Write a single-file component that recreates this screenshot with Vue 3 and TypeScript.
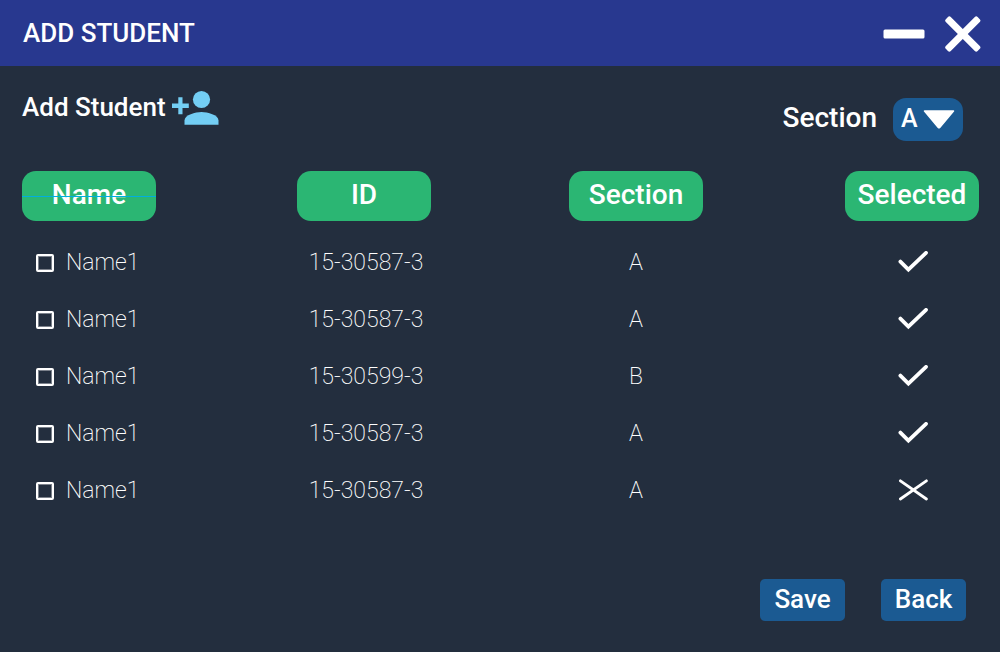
<script setup lang="ts">
import { ref } from 'vue'

interface Student {
  name: string
  id: string
  section: string
  selected: boolean
  checked: boolean
}

const columns: string[] = ['Name', 'ID', 'Section', 'Selected']
const section = ref<string>('A')
const students = ref<Student[]>([
  { name: 'Name1', id: '15-30587-3', section: 'A', selected: true, checked: false },
  { name: 'Name1', id: '15-30587-3', section: 'A', selected: true, checked: false },
  { name: 'Name1', id: '15-30599-3', section: 'B', selected: true, checked: false },
  { name: 'Name1', id: '15-30587-3', section: 'A', selected: true, checked: false },
  { name: 'Name1', id: '15-30587-3', section: 'A', selected: false, checked: false },
])
</script>

<template>
  <div class="window">
    <header class="titlebar">
      <h1 class="title">ADD STUDENT</h1>
      <div class="controls">
        <button type="button" class="control" aria-label="Minimize">
          <svg width="42" height="38" viewBox="0 0 42 38"><rect x="0.5" y="15.5" width="41" height="9" rx="1.5" fill="#fff" /></svg>
        </button>
        <button type="button" class="control" aria-label="Close">
          <svg width="38" height="38" viewBox="0 0 38 38">
            <g fill="#fff" transform="rotate(45 18.8 20)">
              <rect x="-3.7" y="16.5" width="45" height="7" rx="2" />
              <rect x="15.3" y="-2.5" width="7" height="45" rx="2" />
            </g>
          </svg>
        </button>
      </div>
    </header>

    <main class="content">
      <div class="toolbar">
        <button type="button" class="add">
          <span>Add Student</span>
          <svg class="add-icon" width="48" height="36" viewBox="0 0 48 36" fill="#73cef4">
            <circle cx="30.5" cy="9.5" r="8.6" />
            <path d="M13.5 34.8V30.5C13.5 24.8 24.5 21.9 30.5 21.9S47.5 24.8 47.5 30.5V34.8Z" />
            <path d="M7.3 7.3h4.2v6.3h6.3v4.4h-6.3v6.2H7.3v-6.2H1v-4.4h6.3Z" />
          </svg>
        </button>
        <div class="filter">
          <label for="section">Section</label>
          <div class="select-wrap">
            <select id="section" v-model="section">
              <option>A</option>
              <option>B</option>
            </select>
            <svg class="arrow" width="32" height="20" viewBox="0 0 32 20">
              <path d="M1.5 2H30.5L16.7 18.5Q16 19.1 15.3 18.5Z" fill="#fff" stroke="#fff" stroke-width="1.5" stroke-linejoin="round" />
            </svg>
          </div>
        </div>
      </div>

      <table class="students">
        <thead>
          <tr>
            <th v-for="column in columns" :key="column" scope="col">
              <span class="pill" :class="{ struck: column === 'Name' }">{{ column }}</span>
            </th>
          </tr>
        </thead>
        <tbody>
          <tr v-for="(student, index) in students" :key="index">
            <td>
              <label class="pick" :for="`student-${index}`">
                <input :id="`student-${index}`" v-model="student.checked" type="checkbox" />
                <span>{{ student.name }}</span>
              </label>
            </td>
            <td><span class="cell number">{{ student.id }}</span></td>
            <td><span class="cell">{{ student.section }}</span></td>
            <td>
              <span class="cell mark">
                <svg v-if="student.selected" width="32" height="24" viewBox="0 0 32 24" role="img" aria-label="Selected">
                  <path d="M4.4 10.6L12.4 18.6L30 1.9" fill="none" stroke="#fff" stroke-width="3.8" stroke-linecap="round" />
                </svg>
                <svg v-else width="32" height="24" viewBox="0 0 32 24" role="img" aria-label="Not selected">
                  <path d="M4.4 1.8L30.4 20M30.4 1.8L4.4 20" fill="none" stroke="#fff" stroke-width="2.8" stroke-linecap="round" />
                </svg>
              </span>
            </td>
          </tr>
        </tbody>
      </table>

      <footer class="actions">
        <button type="button" class="action">Save</button>
        <button type="button" class="action">Back</button>
      </footer>
    </main>
  </div>
</template>

<style>
body {
  background: #232e3e;
}
</style>

<style scoped>
.window {
  display: flex;
  flex-direction: column;
  min-height: 100vh;
  background: #232e3e;
  color: #fff;
  font-family: Roboto, "Liberation Sans", sans-serif;
  font-weight: 500;
}

.window *,
.window *::after {
  box-sizing: border-box;
}

button,
select {
  padding: 0;
  border: 0;
  background: none;
  color: inherit;
  font: inherit;
  cursor: pointer;
}

svg {
  display: block;
}

.titlebar {
  display: flex;
  align-items: center;
  justify-content: space-between;
  padding: 14px 18px 14px 23px;
  background: #28388f;
}

.title {
  margin: 0;
  font-size: 26px;
  font-weight: 500;
  line-height: 36px;
}

.controls {
  display: flex;
  gap: 19px;
}

.content {
  display: flex;
  flex: 1;
  flex-direction: column;
  padding: 24px 21px 31px 22px;
}

.toolbar {
  display: flex;
  align-items: flex-start;
  justify-content: space-between;
  margin-bottom: 30px;
}

.add {
  display: flex;
  gap: 5px;
  font-size: 26px;
  line-height: 34px;
}

.filter {
  display: flex;
  align-items: flex-start;
  gap: 16px;
  padding: 8px 16px 0 0;
  font-size: 28px;
  line-height: 40px;
}

.select-wrap {
  position: relative;
  border-radius: 13px;
  background: #1b5a92;
}

select {
  display: block;
  width: 70px;
  height: 43px;
  padding: 0 0 2px 8px;
  border-radius: 13px;
  appearance: none;
  font-size: 25px;
}

option {
  background: #1b5a92;
}

.arrow {
  position: absolute;
  top: 11px;
  right: 8px;
  pointer-events: none;
}

.students {
  width: 100%;
  border-collapse: collapse;
  table-layout: fixed;
}

th,
td {
  padding: 0;
  text-align: left;
}

th {
  padding-bottom: 13px;
  font-size: 28px;
  font-weight: 500;
}

th:nth-child(2) {
  width: 272px;
}

th:nth-child(3) {
  width: 276px;
}

th:nth-child(4) {
  width: 134px;
}

.pill {
  position: relative;
  display: block;
  width: 134px;
  padding-bottom: 2px;
  border-radius: 14px;
  background: #2bb673;
  line-height: 48px;
  text-align: center;
}

.struck::after {
  position: absolute;
  top: 25px;
  left: 0;
  width: 100%;
  height: 1px;
  background: #00aee0;
  content: "";
}

td {
  height: 57px;
  font-size: 23px;
  font-weight: 200;
  line-height: 30px;
}

.cell {
  display: block;
  width: 134px;
  text-align: center;
}

.number {
  padding-left: 4px;
}

.mark {
  display: flex;
  justify-content: center;
}

.pick {
  display: flex;
  align-items: center;
  gap: 12px;
  padding-left: 14px;
}

input {
  width: 18px;
  height: 18px;
  margin: 0;
  border: 2px solid #fff;
  border-radius: 2px;
  box-shadow: inset 0 0 0 1px rgb(255 255 255 / 40%);
  appearance: none;
}

input:checked {
  background: #2bb673;
}

.actions {
  display: flex;
  justify-content: flex-end;
  gap: 36px;
  margin-top: auto;
  padding: 24px 13px 0 0;
}

.action {
  width: 85px;
  padding-bottom: 2px;
  border-radius: 5px;
  background: #1b5a92;
  font-size: 26px;
  line-height: 40px;
}
</style>
